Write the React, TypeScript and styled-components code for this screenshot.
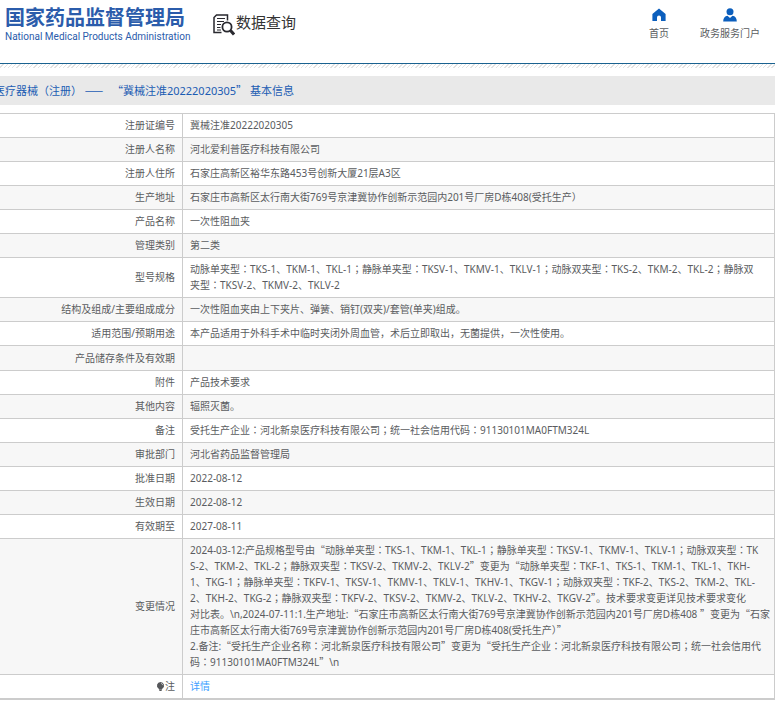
import React from "react";
import styled, { createGlobalStyle } from "styled-components";

const GlobalStyle = createGlobalStyle`
  * { box-sizing: border-box; }
  body {
    margin: 0;
    background: #fff;
    color: #5a5c60;
    font: 10px/16px "Noto Sans", "Noto Sans CJK SC", sans-serif;
    overflow-x: hidden;
  }
  a { color: inherit; text-decoration: none; }
`;

const Header = styled.header`
  display: flex;
  align-items: flex-start;
  height: 63px;
  padding: 4px 15px 0 5px;
`;

const Logo = styled.a`
  display: block;
  width: 206px;
  color: #2b5cab;
  white-space: nowrap;
`;

const LogoName = styled.span`
  display: block;
  font: bold 20px/26px "Noto Sans CJK SC", sans-serif;
`;

const LogoEnglish = styled.span`
  display: block;
  font: 400 10px/14px Roboto, sans-serif;
`;

const QueryTitle = styled.h1`
  display: flex;
  align-items: center;
  gap: 1px;
  margin: 4px 0 0 2px;
  color: #333;
  font-weight: 400;
  font-size: 15px;
  line-height: 24px;

  svg { margin-top: 6px; }
`;

const Nav = styled.nav`
  display: flex;
  gap: 31px;
  margin-left: auto;
`;

const NavLink = styled.a`
  display: flex;
  flex-direction: column;
  align-items: center;
  gap: 3px;
  padding-top: 4px;
`;

const Divider = styled.div`
  height: 5px;
  border-top: 1px solid #1a6290;
  background: repeating-linear-gradient(135deg, #fff 0 2px, #e2e2e2 2px 3px);
`;

const TitleBar = styled.h2`
  margin: 8px 0;
  padding: 6px 0;
  background: #e9e9e9;
  color: #1b5cb3;
  font-weight: 400;
  font-size: 11px;
  text-indent: -6px;
  white-space: pre;
  overflow: hidden;
`;

const InfoTable = styled.table`
  width: 100%;
  border-spacing: 0;
  border-right: 1px solid #ccc;
  border-bottom: 1px solid #ccc;

  tr:nth-child(even) { background: #f7f7f7; }
`;

const Label = styled.th`
  width: 183px;
  padding: 3px 7px 4px 0;
  border-top: 1px solid #ccc;
  border-right: 1px solid #ccc;
  font-weight: 400;
  text-align: right;
`;

const Value = styled.td`
  padding: 3px 0 4px 7px;
  border-top: 1px solid #ccc;
  white-space: pre;

  &:empty { padding-bottom: 21px; }
`;

const Line = styled.div`
  height: 16px;
`;

const LastRow = styled.tr`
  td, th { border-bottom: 1px solid #ccc; }
`;

const DetailLink = styled.a`
  && { color: #409eff; }
`;

const Quote = styled.span`
  font-family: "Noto Sans CJK SC", sans-serif;
`;

const Stop = styled.span`
  font-family: "Noto Sans CJK JP", sans-serif;
`;

const Bulb = styled.svg`
  vertical-align: -1px;
`;

/* Sets quotes and colons at the full width of a Chinese character. */
function Chinese({ text }: { text: string }) {
  return (
    <>
      {text.split(/([“”—]+|[：；])/).map((part, i) => {
        if (/^[“”—]/.test(part)) return <Quote key={i}>{part}</Quote>;
        if (/^[：；]/.test(part)) return <Stop key={i}>{part}</Stop>;
        return part;
      })}
    </>
  );
}

function QueryIcon() {
  return (
    <svg width="22" height="22" viewBox="0 0 22 22" fill="none" stroke="#29292f" aria-hidden="true">
      <path d="M14.500 6.500V1H3.500L1 3.500V18.500h7.500" strokeWidth="1.500" />
      <path d="M4 4.500h8M4 7.500h7M4 10.500h4M4 13.500h3.500M4 16h4" strokeWidth="1.200" />
      <circle cx="14" cy="13" r="4.600" strokeWidth="1.800" />
      <path d="m17.500 16.500 3.500 4" strokeWidth="3" />
    </svg>
  );
}

function HomeIcon() {
  return (
    <svg width="14" height="14" viewBox="0 0 14 14" fill="#0c5fbd" aria-hidden="true">
      <path d="M7 .5 13.600 6V13H9V9.500a2 2 0 0 0-4 0V13H.4V6z" />
    </svg>
  );
}

function PersonIcon() {
  return (
    <svg width="14" height="14" viewBox="0 0 14 14" fill="#0c5fbd" aria-hidden="true">
      <circle cx="7" cy="3.800" r="3.500" />
      <path d="M.2 13.500c0-3.500 1.600-5.300 4.300-5.700L7 10l2.500-2.200c2.700.4 4.300 2.200 4.300 5.700z" />
    </svg>
  );
}

function BulbIcon() {
  return (
    <Bulb width="9" height="9" viewBox="0 0 9 10" fill="#55575a" aria-hidden="true">
      <path d="M4.500 0a4 4 0 0 1 2.200 7.300L6 8.500H3l-.7-1.200A4 4 0 0 1 4.500 0zM3.200 9h2.600v1H3.200z" />
      <path d="M5 1.500q1.800.3 2 2" fill="none" stroke="#eee" strokeWidth=".7" />
    </Bulb>
  );
}

const rows: [string, string][] = [
  ["注册证编号", "冀械注准20222020305"],
  ["注册人名称", "河北爱利普医疗科技有限公司"],
  ["注册人住所", "石家庄高新区裕华东路453号创新大厦21层A3区"],
  ["生产地址", "石家庄市高新区太行南大街769号京津冀协作创新示范园内201号厂房D栋408(受托生产）"],
  ["产品名称", "一次性阻血夹"],
  ["管理类别", "第二类"],
  [
    "型号规格",
    `动脉单夹型：TKS-1、TKM-1、TKL-1；静脉单夹型：TKSV-1、TKMV-1、TKLV-1；动脉双夹型：TKS-2、TKM-2、TKL-2；静脉双
夹型：TKSV-2、TKMV-2、TKLV-2`,
  ],
  ["结构及组成/主要组成成分", "一次性阻血夹由上下夹片、弹簧、销钉(双夹)/套管(单夹)组成。"],
  ["适用范围/预期用途", "本产品适用于外科手术中临时夹闭外周血管，术后立即取出，无菌提供，一次性使用。"],
  ["产品储存条件及有效期", ""],
  ["附件", "产品技术要求"],
  ["其他内容", "辐照灭菌。"],
  ["备注", "受托生产企业：河北新泉医疗科技有限公司；统一社会信用代码：91130101MA0FTM324L"],
  ["审批部门", "河北省药品监督管理局"],
  ["批准日期", "2022-08-12"],
  ["生效日期", "2022-08-12"],
  ["有效期至", "2027-08-11"],
  [
    "变更情况",
    `2024-03-12:产品规格型号由“动脉单夹型：TKS-1、TKM-1、TKL-1；静脉单夹型：TKSV-1、TKMV-1、TKLV-1；动脉双夹型：TK
S-2、TKM-2、TKL-2；静脉双夹型：TKSV-2、TKMV-2、TKLV-2”变更为“动脉单夹型：TKF-1、TKS-1、TKM-1、TKL-1、TKH-
1、TKG-1；静脉单夹型：TKFV-1、TKSV-1、TKMV-1、TKLV-1、TKHV-1、TKGV-1；动脉双夹型：TKF-2、TKS-2、TKM-2、TKL-
2、TKH-2、TKG-2；静脉双夹型：TKFV-2、TKSV-2、TKMV-2、TKLV-2、TKHV-2、TKGV-2”。技术要求变更详见技术要求变化
对比表。\\n,2024-07-11:1.生产地址:“石家庄市高新区太行南大街769号京津冀协作创新示范园内201号厂房D栋408 ”变更为“石家
庄市高新区太行南大街769号京津冀协作创新示范园内201号厂房D栋408(受托生产）”
2.备注:“受托生产企业名称：河北新泉医疗科技有限公司”变更为“受托生产企业：河北新泉医疗科技有限公司；统一社会信用代
码：91130101MA0FTM324L”\\n`,
  ],
];

export default function App() {
  return (
    <>
      <GlobalStyle />
      <Header>
        <Logo href="#">
          <LogoName>国家药品监督管理局</LogoName>
          <LogoEnglish>National Medical Products Administration</LogoEnglish>
        </Logo>
        <QueryTitle>
          <QueryIcon />
          数据查询
        </QueryTitle>
        <Nav>
          <NavLink href="#">
            <HomeIcon />
            首页
          </NavLink>
          <NavLink href="#">
            <PersonIcon />
            政务服务门户
          </NavLink>
        </Nav>
      </Header>
      <Divider />
      <main>
        <TitleBar>
          <Chinese text="医疗器械（注册） ——   “冀械注准20222020305” 基本信息" />
        </TitleBar>
        <InfoTable>
          <tbody>
            {rows.map(([label, value]) => (
              <tr key={label}>
                <Label scope="row">{label}</Label>
                <Value>
                  {value &&
                    value.split("\n").map((line) => (
                      <Line key={line}>
                        <Chinese text={line} />
                      </Line>
                    ))}
                </Value>
              </tr>
            ))}
            <LastRow>
              <Label scope="row">
                <BulbIcon />注
              </Label>
              <Value>
                <DetailLink href="#">详情</DetailLink>
              </Value>
            </LastRow>
          </tbody>
        </InfoTable>
      </main>
    </>
  );
}
